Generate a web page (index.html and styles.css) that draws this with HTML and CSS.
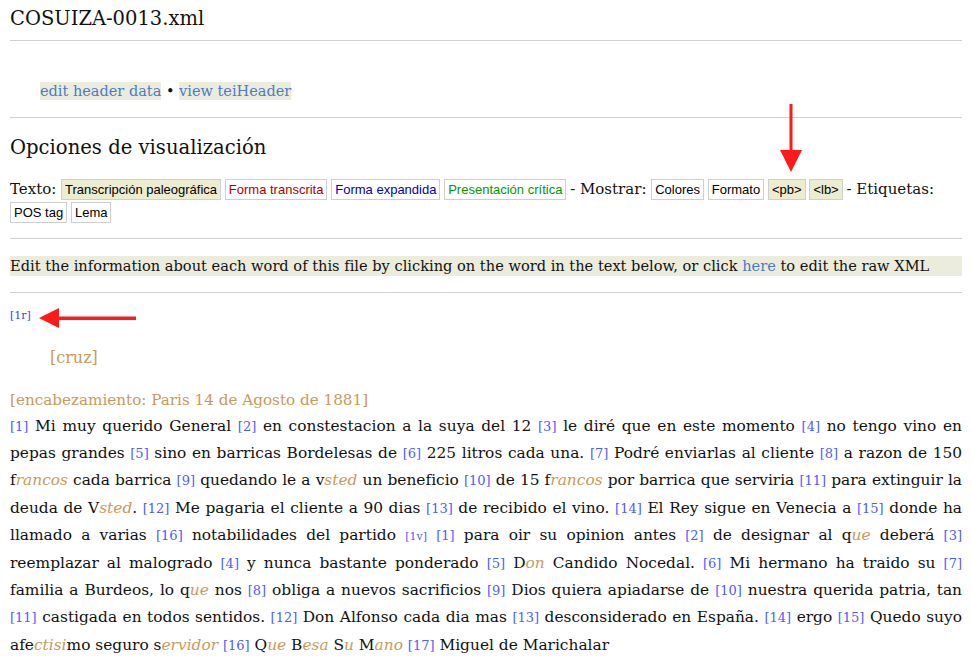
FILE: index.html
```html
<!DOCTYPE html>
<html lang="es">
<head>
<meta charset="utf-8">
<title>COSUIZA-0013.xml</title>
<link rel="stylesheet" href="styles.css">
</head>
<body>
<div class="page">
  <h1 class="title">COSUIZA-0013.xml</h1>
  <hr class="rule">
  <div class="header-links">
    <a class="hl" href="#">edit header data</a> &bull; <a class="hl" href="#">view teiHeader</a>
  </div>
  <hr class="rule">
  <h2 class="subtitle">Opciones de visualización</h2>
  <div class="options">
    Texto: <span class="btn on">Transcripción paleográfica</span>
    <span class="btn red">Forma transcrita</span>
    <span class="btn blue">Forma expandida</span>
    <span class="btn green">Presentación crítica</span>
    - Mostrar: <span class="btn">Colores</span>
    <span class="btn">Formato</span>
    <span class="btn on">&lt;pb&gt;</span>
    <span class="btn on">&lt;lb&gt;</span>
    - Etiquetas: <span class="btn">POS tag</span>
    <span class="btn">Lema</span>
  </div>
  <hr class="rule">
  <div class="info">Edit the information about each word of this file by clicking on the word in the text below, or click <a href="#">here</a> to edit the raw XML</div>
  <hr class="rule">
  <div class="pb">[1r]</div>
  <div class="cruz">[cruz]</div>
  <div class="encab">[encabezamiento: Paris 14 de Agosto de 1881]</div>
  <p class="text"><span class="n">[1]</span> Mi muy querido General <span class="n">[2]</span> en constestacion a la suya del 12 <span class="n">[3]</span> le diré que en este momento <span class="n">[4]</span> no tengo vino en pepas grandes <span class="n">[5]</span> sino en barricas Bordelesas de <span class="n">[6]</span> 225 litros cada una. <span class="n">[7]</span> Podré enviarlas al cliente <span class="n">[8]</span> a razon de 150 f<i>rancos</i> cada barrica <span class="n">[9]</span> quedando le a v<i>sted</i> un beneficio <span class="n">[10]</span> de 15 f<i>rancos</i> por barrica que serviria <span class="n">[11]</span> para extinguir la deuda de V<i>sted</i>. <span class="n">[12]</span> Me pagaria el cliente a 90 dias <span class="n">[13]</span> de recibido el vino. <span class="n">[14]</span> El Rey sigue en Venecia a <span class="n">[15]</span> donde ha llamado a varias <span class="n">[16]</span> notabilidades del partido <span class="pbi">[1v]</span> <span class="n">[1]</span> para oir su opinion antes <span class="n">[2]</span> de designar al q<i>ue</i> deberá <span class="n">[3]</span> reemplazar al malogrado <span class="n">[4]</span> y nunca bastante ponderado <span class="n">[5]</span> D<i>on</i> Candido Nocedal. <span class="n">[6]</span> Mi hermano ha traido su <span class="n">[7]</span> familia a Burdeos, lo q<i>ue</i> nos <span class="n">[8]</span> obliga a nuevos sacrificios <span class="n">[9]</span> Dios quiera apiadarse de <span class="n">[10]</span> nuestra querida patria, tan <span class="n">[11]</span> castigada en todos sentidos. <span class="n">[12]</span> Don Alfonso cada dia mas <span class="n">[13]</span> desconsiderado en España. <span class="n">[14]</span> ergo <span class="n">[15]</span> Quedo suyo afe<i>ctisi</i>mo seguro s<i>ervidor</i> <span class="n">[16]</span> Q<i>ue</i> B<i>esa</i> S<i>u</i> M<i>ano</i> <span class="n">[17]</span> Miguel de Marichalar</p>
  <hr class="rule">

  <svg class="arrow-down" width="24" height="70" viewBox="0 0 24 70" aria-hidden="true">
    <rect x="10.5" y="0" width="3" height="48" fill="#ff1a1a"/>
    <polygon points="1,46 23,46 12,68" fill="#ff1a1a"/>
  </svg>
  <svg class="arrow-left" width="98" height="22" viewBox="0 0 98 22" aria-hidden="true">
    <rect x="18" y="9.5" width="79" height="3.5" fill="#ff1a1a"/>
    <polygon points="0,11 20,1 20,21" fill="#ff1a1a"/>
  </svg>
</div>
</body>
</html>
```
FILE: styles.css
```css
html, body {
  margin: 0;
  padding: 0;
  background: #fff;
}
.page {
  position: relative;
  padding: 0 10px;
  font-family: "DejaVu Serif", serif;
  color: #111;
}
.title {
  font-weight: normal;
  font-size: 19.5px;
  margin: 0;
  padding-top: 6px;
  line-height: 26px;
  height: 34px;
}
.rule {
  border: 0;
  border-top: 1px solid #d0d0d0;
  margin: 0;
}
.header-links {
  font-size: 14.5px;
  padding: 40px 0 0 30px;
  height: 36px;
  line-height: 20px;
}
.hl {
  color: #4a7bc9;
  background: #ececdc;
  text-decoration: none;
  padding: 1px 0;
}
.subtitle {
  font-weight: normal;
  font-size: 19.6px;
  margin: 0;
  padding-top: 17px;
  line-height: 26px;
  height: 43px;
}
.options {
  font-size: 15px;
  line-height: 22px;
  height: 60px;
}
.btn {
  font-family: "Liberation Sans", Arial, sans-serif;
  font-size: 13px;
  border: 1px solid #cfcfcf;
  padding: 2px 3px;
  color: #000;
  background: #fff;
  margin-right: -1px;
}
.btn.on { background: #ececd0; }
.btn.red { color: #b00000; }
.btn.blue { color: #0000b0; }
.btn.green { color: #009900; }
.info {
  margin-top: 17px;
  background: #ececdc;
  font-size: 14.6px;
  line-height: 20px;
  height: 20px;
  margin-bottom: 16px;
}
.info a {
  color: #4a7bc9;
  text-decoration: none;
}
.pb {
  font-size: 11px;
  color: #3344ff;
  margin-top: 15px;
  line-height: 16px;
}
.cruz {
  color: #c99a5b;
  font-size: 16px;
  padding-left: 40px;
  margin-top: 21px;
  line-height: 26px;
}
.encab {
  color: #c99a5b;
  font-size: 15.2px;
  margin-top: 16px;
  line-height: 26px;
}
.text {
  margin: 0 0 8px 0;
  font-size: 15.4px;
  line-height: 26.2px;
  text-align: justify;
}
.text i {
  color: #c99a5b;
}
.n {
  color: #4d5cff;
  font-size: 13px;
}
.pbi {
  color: #4d5cff;
  font-size: 11px;
}
.arrow-down {
  position: absolute;
  left: 779px;
  top: 104px;
}
.arrow-left {
  position: absolute;
  left: 39px;
  top: 307px;
}
```
